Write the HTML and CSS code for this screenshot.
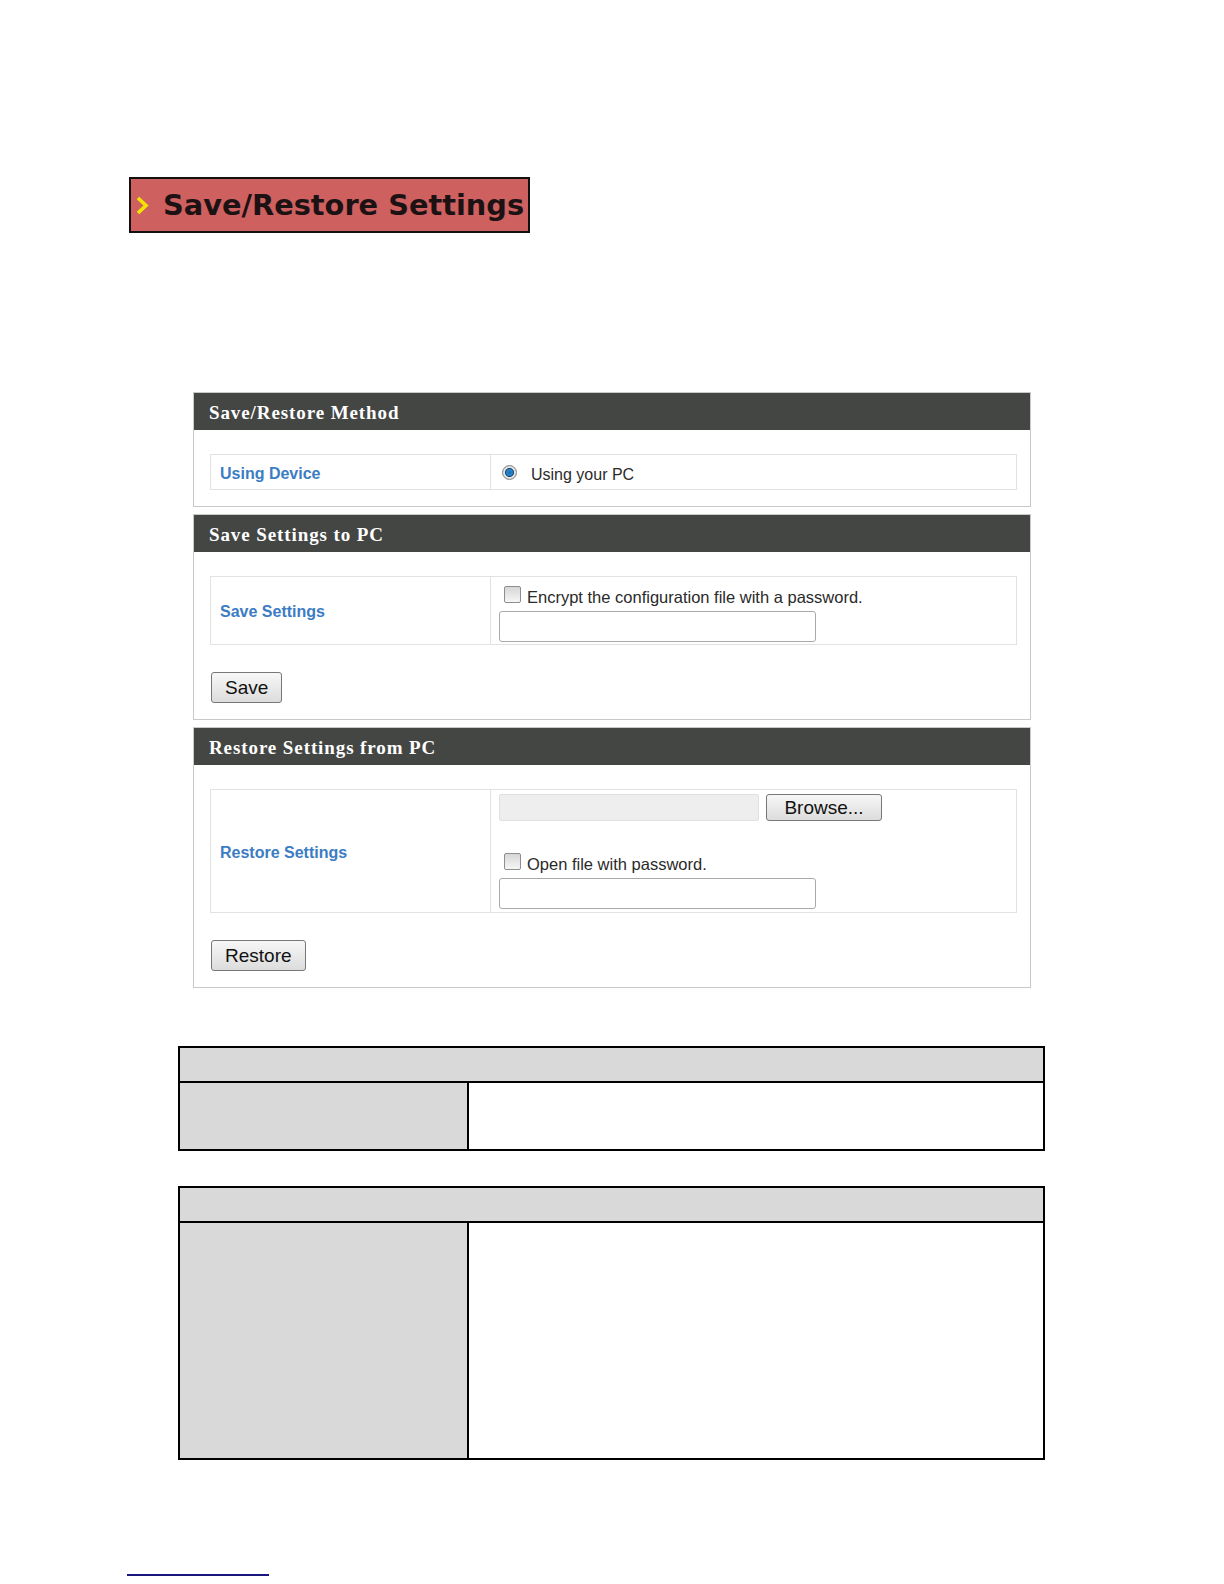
FILE: index.html
```html
<!DOCTYPE html>
<html>
   <head>
      <title>Save/Restore Settings</title>
      <link rel="stylesheet" href="styles.css">
   </head>
   <body>
   <div class="page">

   <h1 class="banner">
      <svg class="chev" width="13" height="19" viewBox="0 0 13 19">
         <polyline points="2,2 10,9.5 2,17" fill="none" stroke="#f2e400" stroke-width="3.6"/>
      </svg>
      Save/Restore Settings
   </h1>

   <div class="shot">
      <div class="panel">
         <div class="head">Save/Restore Method</div>
         <div class="body">
            <div class="row">
               <div class="lab">Using Device</div>
               <div class="val one">
                  <input type="radio" class="radio" checked>
                  <span class="tx">Using your PC</span>
               </div>
            </div>
         </div>
      </div>

      <div class="panel">
         <div class="head">Save Settings to PC</div>
         <div class="body">
            <div class="row">
               <div class="lab">Save Settings</div>
               <div class="val two">
                  <label class="chk"><input type="checkbox" class="box"><span class="tx">Encrypt the configuration file with a password.</span></label>
                  <input type="text" class="txt">
               </div>
            </div>
            <button class="btn">Save</button>
         </div>
      </div>

      <div class="panel">
         <div class="head">Restore Settings from PC</div>
         <div class="body">
            <div class="row">
               <div class="lab">Restore Settings</div>
               <div class="val three">
                  <div class="file"><span class="fbox"></span><button class="btn browse">Browse...</button></div>
                  <label class="chk gap"><input type="checkbox" class="box"><span class="tx">Open file with password.</span></label>
                  <input type="text" class="txt">
               </div>
            </div>
            <button class="btn">Restore</button>
         </div>
      </div>
   </div>

   <div class="spec first">
      <div class="spec-head"></div>
      <div class="spec-key"></div>
      <div class="spec-val"></div>
   </div>

   <div class="spec second">
      <div class="spec-head"></div>
      <div class="spec-key"></div>
      <div class="spec-val"></div>
   </div>

   <div class="rule"></div>

   </div>
   </body>
</html>
```

FILE: styles.css
```css
body { margin:0; background:#fff; font-family:"Liberation Sans", Arial, sans-serif; }
.page { padding-top:177px; padding-bottom:8px; }

.banner { margin:0 0 0 129px; width:401px; height:56px; box-sizing:border-box;
          border:2px solid #111; background:#ce6060; display:flex; align-items:center;
          font-family:"DejaVu Sans", Verdana, sans-serif; font-size:28.8px; font-weight:bold;
          color:#1c1214; letter-spacing:0; }
.chev { margin-left:5px; margin-right:14px; }

/* the router ui screenshot */
.shot { margin:159px 0 0 193px; width:838px; }
.panel { border:1px solid #c9c9c9; margin-bottom:7px; }
.head { height:37px; line-height:40px; overflow:hidden; background:#444644; color:#fff;
        padding-left:15px; font-family:"Liberation Serif", "Times New Roman", serif;
        font-size:19px; font-weight:bold; letter-spacing:0.9px; }
.body { padding:24px 13px 16px 16px; }
.row { display:grid; grid-template-columns:280px 1fr; border:1px solid #e2e2e2; }
.lab { border-right:1px solid #e2e2e2; display:flex; align-items:center; padding:3px 0 0 9px;
       color:#3b7cc3; font-size:16px; font-weight:bold; }
.val { color:#2a2a2a; font-size:16px; }
.val.one { height:34px; display:flex; align-items:center; padding-left:11px; }
.val.two { padding:8px 0 2px 8px; display:flex; flex-direction:column; align-items:flex-start; }
.val.three { padding:4px 0 3px 8px; display:flex; flex-direction:column; align-items:flex-start; }
.tx { margin-top:6px; }

.radio { appearance:none; margin:0 14px 0 0; width:15px; height:15px; border-radius:50%;
         border:1px solid #8a8a8a; box-sizing:border-box;
         background:radial-gradient(circle, #1d6fb3 0, #2b86c9 3px, #0d3f6e 4px, #e8e8e8 5px, #c9c9c9 7px); }
.chk { display:flex; align-items:center; height:19px; font-size:16.5px; }
.chk.gap { margin-top:31px; }
.box { appearance:none; margin:0 6px 0 5px; width:17px; height:17px; box-sizing:border-box;
       border:1px solid #8e8e8e; border-radius:2px; background:linear-gradient(#d6d6d6, #f6f6f6); }
.txt { margin:7px 0 0 0; width:317px; height:31px; box-sizing:border-box; border:1px solid #a9a9a9;
       border-radius:3px; background:#fff; }

.file { display:flex; align-items:center; height:27px; }
.fbox { width:260px; height:27px; box-sizing:border-box; background:#eeeeee;
        border:1px solid #e0e0e0; border-radius:2px; }

.btn { display:block; margin:27px 0 0 1px; height:31px; padding:0 13px; box-sizing:border-box;
       border:1px solid #777; border-radius:3px; background:linear-gradient(#f7f7f7, #dcdcdc);
       font-family:"Liberation Sans", Arial, sans-serif; font-size:19px; color:#111; line-height:29px; }
.btn.browse { margin:0 0 0 7px; height:27px; line-height:25px; padding:0 16px; width:116px; }

/* empty description tables */
.spec { display:grid; grid-template-columns:289px 1fr; margin-left:178px; width:867px;
        box-sizing:border-box; border:2px solid #000; }
.first { margin-top:58px; }
.second { margin-top:35px; }
.spec-head { grid-column:1 / -1; height:33px; background:#d9d9d9; border-bottom:2px solid #000; }
.spec-key { background:#d9d9d9; border-right:2px solid #000; }
.first .spec-key, .first .spec-val { height:66px; }
.second .spec-key, .second .spec-val { height:235px; }

.rule { margin:114px 0 0 127px; width:142px; height:2px; background:#16167c; }
```
